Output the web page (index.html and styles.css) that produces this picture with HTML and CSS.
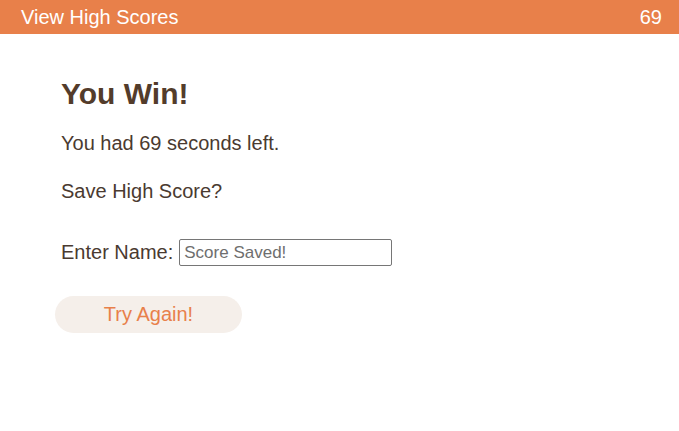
FILE: index.html
```html
<!DOCTYPE html>
<html>
<head>
<meta charset="utf-8">
<link rel="stylesheet" href="styles.css">
</head>
<body>
<header class="topbar">
  <span class="link">View High Scores</span>
  <span class="timer">69</span>
</header>
<main class="content">
  <h1 class="title">You Win!</h1>
  <p class="line">You had 69 seconds left.</p>
  <p class="line">Save High Score?</p>
  <div class="form-row">
    <label class="label" for="name">Enter Name:</label>
    <input class="name-input" id="name" type="text" value="Score Saved!">
  </div>
  <button class="btn">Try Again!</button>
</main>
</body>
</html>
```
FILE: styles.css
```css
* { box-sizing: border-box; }
html, body { margin: 0; padding: 0; background: #fff; }
body {
  font-family: "Liberation Sans", Arial, sans-serif;
  color: #4a3a30;
  width: 679px;
  height: 431px;
  overflow: hidden;
}
.topbar {
  height: 34px;
  background: #e8804a;
  color: #fff;
  display: flex;
  align-items: center;
  justify-content: space-between;
  padding: 0 17px 0 21px;
  font-size: 20px;
}
.content {
  padding: 43px 0 0 61px;
}
.title {
  margin: 0;
  font-size: 30px;
  font-weight: bold;
  line-height: 34px;
  color: #533c2b;
}
.line {
  margin: 21px 0 0;
  font-size: 20px;
  line-height: 23px;
}
.line + .line { margin-top: 25px; }
.form-row {
  margin-top: 36px;
  display: flex;
  align-items: center;
  gap: 6px;
}
.label { font-size: 20px; line-height: 23px; }
.name-input {
  width: 213px;
  height: 27px;
  border: 1px solid #767676;
  border-radius: 2px;
  padding: 0 4px;
  font-family: "Liberation Sans", Arial, sans-serif;
  font-size: 17px;
  color: #6e6e6e;
  background: #fff;
}
.btn {
  display: block;
  margin: 30px 0 0 -6px;
  width: 187px;
  height: 37px;
  border: none;
  border-radius: 19px;
  background: #f5efea;
  color: #e8804a;
  font-family: "Liberation Sans", Arial, sans-serif;
  font-size: 20px;
}
```
